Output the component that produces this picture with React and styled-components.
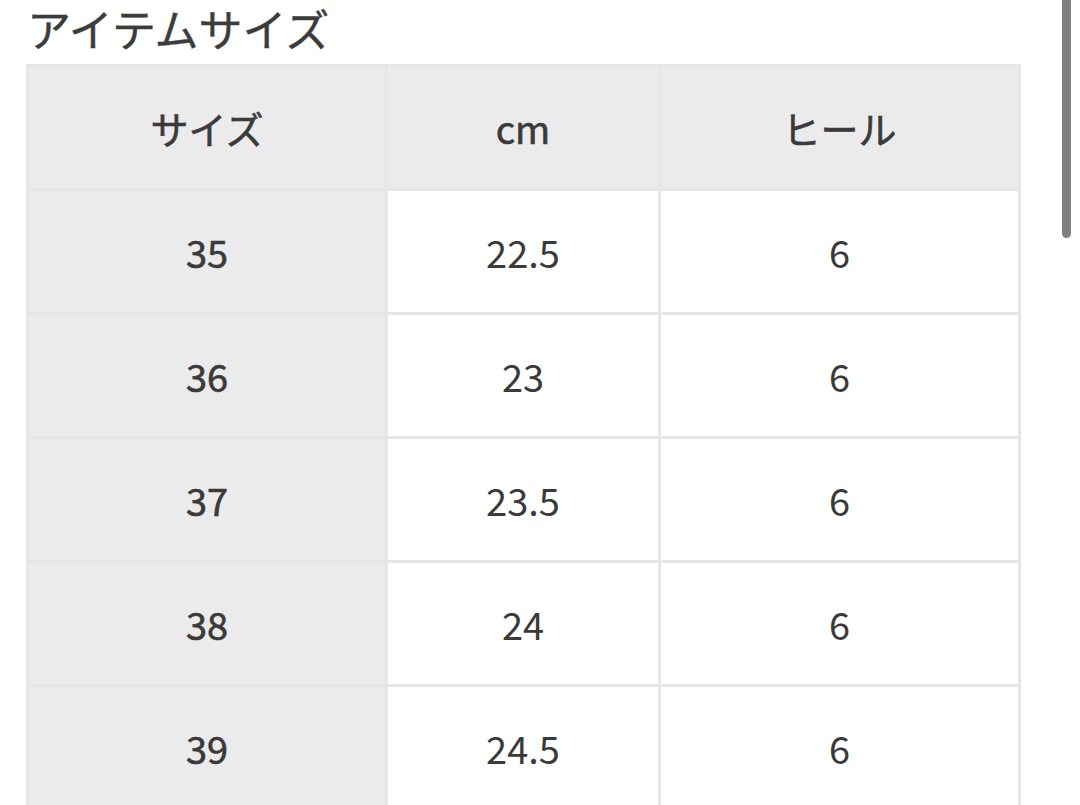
import React from "react";
import styled, { createGlobalStyle } from "styled-components";

const GlobalStyle = createGlobalStyle`
  html, body {
    margin: 0;
    padding: 0;
    background: #fff;
    overflow: hidden;
  }
  body {
    font-family: "Noto Sans CJK JP", "Noto Sans", sans-serif;
    color: #3a3a3a;
  }
`;

const Page = styled.div`
  padding: 0 0 0 26px;
  width: 1080px;
  box-sizing: border-box;
`;

const Title = styled.h2`
  margin: 0 0 8px 1px;
  font-size: 44px;
  line-height: 56px;
  font-weight: 400;
  -webkit-text-stroke: 0.4px #3c3c3c;
  color: #3c3c3c;
`;

const Grid = styled.div`
  display: grid;
  grid-template-columns: 356px 270px 357px;
  grid-auto-rows: 121px;
  gap: 3px;
  padding: 3px;
  width: max-content;
  background: #e6e6e6;
`;

const Cell = styled.div`
  display: flex;
  align-items: center;
  justify-content: center;
  font-size: 38px;
  font-weight: 400;
  -webkit-text-stroke: ${p => (p.$head ? "0.6px #3a3a3a" : "0")};
  background: ${p => (p.$head ? "#ebebeb" : "#fff")};
  color: #3a3a3a;
`;

const Scrollbar = styled.div`
  position: fixed;
  top: -6px;
  right: 9px;
  width: 9px;
  height: 244px;
  border-radius: 5px;
  background: #808080;
`;

const rows = [
  ["35", "22.5", "6"],
  ["36", "23", "6"],
  ["37", "23.5", "6"],
  ["38", "24", "6"],
  ["39", "24.5", "6"],
];

const App = () => {
  return (
    <Page>
      <GlobalStyle />
      <Title>アイテムサイズ</Title>
      <Grid>
        <Cell $head>サイズ</Cell>
        <Cell $head>cm</Cell>
        <Cell $head>ヒール</Cell>
        {rows.map(r => (
          <React.Fragment key={r[0]}>
            <Cell $head>{r[0]}</Cell>
            <Cell>{r[1]}</Cell>
            <Cell>{r[2]}</Cell>
          </React.Fragment>
        ))}
      </Grid>
      <Scrollbar />
    </Page>
  );
};

export default App;
